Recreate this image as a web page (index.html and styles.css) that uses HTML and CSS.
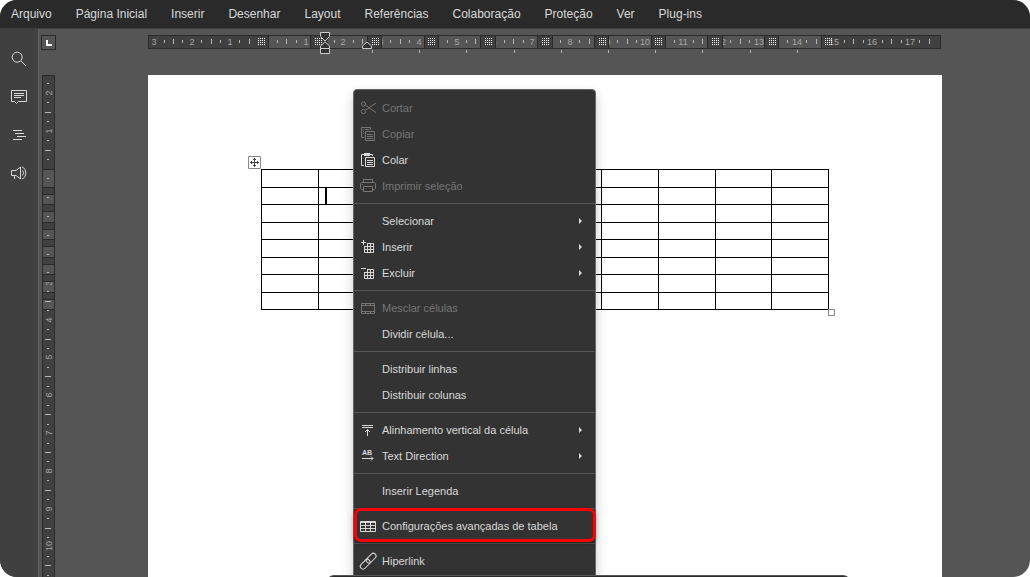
FILE: index.html
```html
<!DOCTYPE html>
<html lang="pt">
<head>
<meta charset="utf-8">
<title>Editor de documentos</title>
<link rel="stylesheet" href="styles.css">
</head>
<body>
<div class="app">
  <header class="tabs" role="tablist">
    <button class="tab" role="tab">Arquivo</button>
    <button class="tab" role="tab">Página Inicial</button>
    <button class="tab" role="tab">Inserir</button>
    <button class="tab" role="tab">Desenhar</button>
    <button class="tab" role="tab">Layout</button>
    <button class="tab" role="tab">Referências</button>
    <button class="tab" role="tab">Colaboração</button>
    <button class="tab" role="tab">Proteção</button>
    <button class="tab" role="tab">Ver</button>
    <button class="tab" role="tab">Plug-ins</button>
  </header>

  <div class="main">
    <nav class="sidebar">
      <button class="side-btn" aria-label="Localizar">
        <svg class="icon" viewBox="0 0 20 20"><circle cx="8.2" cy="8.2" r="5"/><path d="M12 12l5 5"/></svg>
      </button>
      <button class="side-btn" aria-label="Comentários">
        <svg class="icon" viewBox="0 0 20 20"><path d="M2.500 3.500h15v11H9.500l-2 2-2-2h-3zM5 6.500h10M5 8.500h10M5 10.500h7"/></svg>
      </button>
      <button class="side-btn" aria-label="Títulos">
        <svg class="icon" viewBox="0 0 20 20"><path d="M4 5.500h9M6 8.500h9M8 11.500h9M4 14.500h9"/></svg>
      </button>
      <button class="side-btn" aria-label="Comentários e suporte">
        <svg class="icon" viewBox="0 0 20 20"><path d="M2.500 7.500H7L11.500 4v12L7 12.500H2.500zM5.500 12.500v3.500M13 7.500c2 1 2 4 0 5M13 4c5 1.500 5 10.500 0 12"/></svg>
      </button>
    </nav>

    <main class="workspace">
      <button class="tab-stop" aria-label="Tabulação">
        <svg class="tab-stop-icon" viewBox="0 0 6 6"><path d="M0 0h2v4h4v2H0z"/></svg>
      </button>

      <svg class="ruler-h" viewBox="148 32 794 22">
        <defs>
          <path id="grip" class="grip" d="M0 .5h8M0 2.500h8M0 4.500h8M0 6.500h8"/>
        </defs>
        <path class="ruler-light" d="M148 35h793v14H148z"/>
        <path class="ruler-dark" d="M148 35h121v14H148zM821 35h120v14H821z"/>
        <g class="ruler-num">
          <text x="154" y="45">3</text><text x="192" y="45">2</text><text x="230" y="45">1</text>
          <text x="306" y="45">1</text><text x="343" y="45">2</text><text x="381" y="45">3</text>
          <text x="419" y="45">4</text><text x="457" y="45">5</text><text x="494" y="45">6</text>
          <text x="532" y="45">7</text><text x="570" y="45">8</text><text x="608" y="45">9</text>
          <text x="645" y="45">10</text><text x="683" y="45">11</text><text x="721" y="45">12</text>
          <text x="759" y="45">13</text><text x="797" y="45">14</text><text x="834" y="45">15</text>
          <text x="872" y="45">16</text><text x="910" y="45">17</text>
        </g>
        <path class="ruler-dark" d="M310 35h18v14h-18zM367 35h15v14h-15zM424 35h15v14h-15zM480 35h15v14h-15zM537 35h16v14h-16zM594 35h15v14h-15zM651 35h15v14h-15zM707 35h16v14h-16zM764 35h15v14h-15z"/>
        <path class="ruler-edge" d="M148.500 35.500h792v13h-792zM268.500 35v14M310.500 35v14M367.500 35v14M381.500 35v14M424.500 35v14M438.500 35v14M480.500 35v14M495.500 35v14M537.500 35v14M552.500 35v14M594.500 35v14M608.500 35v14M651.500 35v14M665.500 35v14M707.500 35v14M722.500 35v14M764.500 35v14M778.500 35v14M821.500 35v14"/>
        <path class="ruler-tick" d="M173.500 39v5M211.500 39v5M249.500 39v5M286.500 39v5M362.500 39v5M400.500 39v5M475.500 39v5M513.500 39v5M589.500 39v5M627.500 39v5M702.500 39v5M740.500 39v5M816.500 39v5M853.500 39v5M891.500 39v5M929.500 39v5"/>
        <path class="ruler-tick" d="M164.500 40v3M182.500 40v3M201.500 40v3M220.500 40v3M239.500 40v3M277.500 40v3M296.500 40v3M334.500 40v3M353.500 40v3M390.500 40v3M409.500 40v3M447.500 40v3M466.500 40v3M504.500 40v3M523.500 40v3M560.500 40v3M579.500 40v3M617.500 40v3M636.500 40v3M674.500 40v3M693.500 40v3M730.500 40v3M749.500 40v3M787.500 40v3M806.500 40v3M844.500 40v3M863.500 40v3M882.500 40v3M901.500 40v3M919.500 40v3"/>
        <path class="ruler-tick" d="M372.500 50v3M419.500 50v3M466.500 50v3M514.500 50v3M561.500 50v3M608.500 50v3M655.500 50v3M702.500 50v3M750.500 50v3M797.500 50v3"/>
        <use href="#grip" x="258" y="38"/><use href="#grip" x="315" y="38"/><use href="#grip" x="372" y="38"/>
        <use href="#grip" x="428" y="38"/><use href="#grip" x="485" y="38"/><use href="#grip" x="542" y="38"/>
        <use href="#grip" x="599" y="38"/><use href="#grip" x="655" y="38"/><use href="#grip" x="712" y="38"/>
        <use href="#grip" x="769" y="38"/><use href="#grip" x="825" y="38"/>
        <path class="ruler-marker" d="M320.500 32.500h9v4L325 41l-4.500-4.500zM325 42l4.500 4v2.500h-9V46zM320.500 48.500h9v5h-9zM367 42l4.500 4v2.500h-9V46z"/>
      </svg>

      <div class="ruler-v-slot">
        <svg class="ruler-v" viewBox="42 75 13 502">
          <path class="ruler-dark" d="M42 75h13v502H42z"/>
          <path class="ruler-light" d="M42 169h13v140H42z"/>
          <g class="ruler-num">
            <text transform="translate(52 93) rotate(-90)">2</text>
            <text transform="translate(52 131) rotate(-90)">1</text>
            <text transform="translate(52 283) rotate(-90)">3</text>
            <text transform="translate(52 320) rotate(-90)">4</text>
            <text transform="translate(52 357) rotate(-90)">5</text>
            <text transform="translate(52 395) rotate(-90)">6</text>
            <text transform="translate(52 433) rotate(-90)">7</text>
            <text transform="translate(52 471) rotate(-90)">8</text>
            <text transform="translate(52 509) rotate(-90)">9</text>
            <text transform="translate(52 546) rotate(-90)">10</text>
          </g>
          <path class="ruler-dark" d="M42 187h13v7H42zM42 204h13v7H42zM42 222h13v7H42zM42 239h13v7H42zM42 257h13v7H42zM42 274h13v7H42zM42 292h13v7H42z"/>
          <path class="ruler-edge" d="M42.500 580V75.500h12V580M42 169.500h13M42 187.500h13M42 194.500h13M42 204.500h13M42 211.500h13M42 222.500h13M42 229.500h13M42 239.500h13M42 246.500h13M42 257.500h13M42 264.500h13M42 274.500h13M42 281.500h13M42 292.500h13M42 299.500h13M42 309.500h13"/>
          <path class="ruler-tick" d="M45 112.500h6M45 150.500h6M45 301.500h6M45 339.500h6M45 376.500h6M45 414.500h6M45 452.500h6M45 490.500h6M45 528.500h6M45 565.500h6"/>
          <path class="ruler-tick" d="M47 83.500h2M47 102.500h2M47 121.500h2M47 140.500h2M47 159.500h2M47 178.500h2M47 197.500h2M47 216.500h2M47 235.500h2M47 254.500h2M47 272.500h2M47 291.500h2M47 310.500h2M47 329.500h2M47 348.500h2M47 367.500h2M47 386.500h2M47 405.500h2M47 424.500h2M47 443.500h2M47 461.500h2M47 480.500h2M47 499.500h2M47 518.500h2M47 537.500h2M47 556.500h2M47 575.500h2"/>
        </svg>
      </div>

      <section class="page">
        <div class="table-wrap">
          <table class="doc-table">
            <colgroup><col class="wide"><col class="narrow"><col class="wide"><col class="wide"><col class="wide"><col class="narrow"><col class="wide"><col class="wide"><col class="narrow"><col class="wide"></colgroup>
            <tbody>
              <tr><td></td><td></td><td></td><td></td><td></td><td></td><td></td><td></td><td></td><td></td></tr>
              <tr><td></td><td class="active-cell"><span class="caret"></span></td><td></td><td></td><td></td><td></td><td></td><td></td><td></td><td></td></tr>
              <tr><td></td><td></td><td></td><td></td><td></td><td></td><td></td><td></td><td></td><td></td></tr>
              <tr><td></td><td></td><td></td><td></td><td></td><td></td><td></td><td></td><td></td><td></td></tr>
              <tr><td></td><td></td><td></td><td></td><td></td><td></td><td></td><td></td><td></td><td></td></tr>
              <tr><td></td><td></td><td></td><td></td><td></td><td></td><td></td><td></td><td></td><td></td></tr>
              <tr><td></td><td></td><td></td><td></td><td></td><td></td><td></td><td></td><td></td><td></td></tr>
              <tr><td></td><td></td><td></td><td></td><td></td><td></td><td></td><td></td><td></td><td></td></tr>
            </tbody>
          </table>
          <svg class="move-handle" viewBox="0 0 13 13"><path class="handle-box" d="M.5 .5h12v12H.5z"/><path class="handle-arrows" d="M6.500 2v9M2 6.500h9M5 3.500h3M5 9.500h3M3.500 5v3M9.500 5v3"/></svg>
          <span class="resize-handle"></span>
        </div>
      </section>
    </main>
  </div>

  <div class="menu" role="menu">
    <button class="item" role="menuitem" disabled>
      <svg class="icon" viewBox="0 0 20 20"><circle cx="5.500" cy="6" r="2.100"/><circle cx="5.500" cy="13.500" r="2.100"/><path d="M7.300 7.200L18 14.500M7.300 12.300L18 5"/></svg>
      <span class="label">Cortar</span>
    </button>
    <button class="item" role="menuitem" disabled>
      <svg class="icon" viewBox="0 0 20 20"><path d="M6 13.500H3.500v-10h9V6M5 5.500h1M7 5.500h4M5 7.500h1M5 9.500h1M7.500 7.500h9v9h-9zM9 10.500h6M9 12.500h6M9 14.500h6"/></svg>
      <span class="label">Copiar</span>
    </button>
    <button class="item" role="menuitem">
      <svg class="icon" viewBox="0 0 20 20"><path class="solid" d="M6 3h6v3H6z"/><path d="M6 15.500H3.500v-11H6M12 4.500h2.500V6M7.500 7.500h9v9h-9zM9 10.500h6M9 12.500h6M9 14.500h6"/></svg>
      <span class="label">Colar</span>
    </button>
    <button class="item" role="menuitem" disabled>
      <svg class="icon" viewBox="0 0 20 20"><path d="M5.500 6.500v-3h9v3M5 13.500H3.500l-1-1v-5l1-1h13l1 1v5l-1 1H15M5.500 10.500h9v5h-9zM4 8.500h1"/></svg>
      <span class="label">Imprimir seleção</span>
    </button>
    <hr class="sep">
    <button class="item" role="menuitem"><span class="icon"></span><span class="label">Selecionar</span><span class="arrow"></span></button>
    <button class="item" role="menuitem">
      <svg class="icon" viewBox="0 0 20 20"><path d="M5.500 3v5M3 5.500h5M9 6.500h6.500v9h-9V9M6.500 9.500h9M6.500 12.500h9M9.500 6.500v9M12.500 6.500v9"/></svg>
      <span class="label">Inserir</span><span class="arrow"></span>
    </button>
    <button class="item" role="menuitem">
      <svg class="icon" viewBox="0 0 20 20"><path d="M3 5.500h5M9 6.500h6.500v9h-9V9M6.500 9.500h9M6.500 12.500h9M9.500 6.500v9M12.500 6.500v9"/></svg>
      <span class="label">Excluir</span><span class="arrow"></span>
    </button>
    <hr class="sep">
    <button class="item" role="menuitem" disabled>
      <svg class="icon" viewBox="0 0 20 20"><path d="M3.500 5.500h13v10h-13zM3.500 7.500h13M3.500 13.500h13M7.500 5v2M12.500 5v2M7.500 14v2M12.500 14v2"/></svg>
      <span class="label">Mesclar células</span>
    </button>
    <button class="item" role="menuitem"><span class="icon"></span><span class="label">Dividir célula...</span></button>
    <hr class="sep">
    <button class="item" role="menuitem"><span class="icon"></span><span class="label">Distribuir linhas</span></button>
    <button class="item" role="menuitem"><span class="icon"></span><span class="label">Distribuir colunas</span></button>
    <hr class="sep">
    <button class="item" role="menuitem">
      <svg class="icon" viewBox="0 0 20 20"><path d="M4 5.500h11M4 7.500h11M9.500 9.500v6.500M7 12l2.500-2.500L12 12"/></svg>
      <span class="label">Alinhamento vertical da célula</span><span class="arrow"></span>
    </button>
    <button class="item" role="menuitem">
      <svg class="icon" viewBox="0 0 20 20"><text class="icon-text" x="4" y="9">AB</text><path d="M4 12.500h11M13 10.500l2 2-2 2"/></svg>
      <span class="label">Text Direction</span><span class="arrow"></span>
    </button>
    <hr class="sep">
    <button class="item" role="menuitem"><span class="icon"></span><span class="label">Inserir Legenda</span></button>
    <hr class="sep">
    <button class="item highlighted" role="menuitem">
      <svg class="icon" viewBox="0 0 20 20"><path d="M2.500 5.500h15v10h-15zM2 6.500h16M2.500 9.500h15M2.500 12.500h15M7.500 6v10M12.500 6v10"/></svg>
      <span class="label">Configurações avançadas de tabela</span>
    </button>
    <hr class="sep">
    <button class="item" role="menuitem">
      <svg class="icon" viewBox="0 0 20 20"><g transform="rotate(-45 10 10)"><rect x="0" y="7.500" width="11.500" height="5.500" rx="2.750"/><rect x="8.500" y="7.500" width="11.500" height="5.500" rx="2.750"/></g></svg>
      <span class="label">Hiperlink</span>
    </button>
  </div>
  <div class="bottom-panel"></div>
</div>
</body>
</html>
```
FILE: styles.css
```css
html {
  height: 100%;
  background: #fff;
}

body {
  margin: 0;
  height: 100%;
  font-family: "Liberation Sans", Arial, sans-serif;
  font-size: 11px;
}

button {
  margin: 0;
  padding: 0;
  border: 0;
  background: none;
  color: inherit;
  font: inherit;
}

.app {
  position: relative;
  display: flex;
  flex-direction: column;
  height: 100%;
  overflow: hidden;
  border-radius: 17px;
  background: #555;
  color: #d9d9d9;
}

.tabs {
  display: flex;
  flex: none;
  height: 28px;
  border-bottom: 1px solid #404040;
  background: #2a2a2a;
}

.tab {
  padding: 0 12px;
  font-size: 12px;
}

.tab:first-child {
  padding-left: 11px;
}

.main {
  display: flex;
  flex: 1;
  min-height: 0;
}

.sidebar {
  display: flex;
  flex-direction: column;
  flex: none;
  width: 38px;
  padding-top: 11px;
  border-right: 1px solid #616161;
  background: #404040;
}

.side-btn {
  display: flex;
  align-items: center;
  justify-content: center;
  height: 38px;
}

.icon {
  flex: none;
  width: 20px;
  height: 20px;
  fill: none;
  stroke: currentColor;
}

.solid {
  fill: currentColor;
  stroke: none;
}

.icon-text {
  fill: currentColor;
  stroke: none;
  font-size: 7px;
  font-weight: bold;
}

.workspace {
  display: grid;
  flex: 1;
  grid-template-columns: 21px 1fr;
  grid-template-rows: 46px 1fr;
  min-width: 0;
  min-height: 0;
  overflow: hidden;
}

.tab-stop {
  display: flex;
  align-items: center;
  justify-content: center;
  box-sizing: border-box;
  width: 15px;
  height: 15px;
  margin: 6px 0 0 2px;
  border: 1px solid #2a2a2a;
}

.tab-stop-icon {
  width: 6px;
  height: 6px;
  margin: 1px 0 0 1px;
  fill: #fff;
}

.ruler-h {
  justify-self: center;
  width: 794px;
  height: 22px;
  margin-top: 3px;
}

.ruler-v-slot {
  min-height: 0;
  padding-left: 3px;
  overflow: hidden;
}

.ruler-v {
  display: block;
  width: 13px;
  height: 502px;
}

.ruler-light {
  fill: #555;
}

.ruler-dark {
  fill: #404040;
}

.ruler-edge {
  fill: none;
  stroke: #2a2a2a;
}

.ruler-tick {
  stroke: #b6b6b6;
}

.ruler-num {
  fill: #a6a6a6;
  font-size: 9px;
  text-anchor: middle;
}

.ruler-marker {
  fill: #333;
  stroke: #ccc;
}

.grip {
  stroke: #fff;
  stroke-dasharray: 1 1;
}

.page {
  justify-self: center;
  box-sizing: border-box;
  width: 794px;
  padding: 94px 113px 0;
  background: #fff;
}

.table-wrap {
  position: relative;
  width: 568px;
}

.doc-table {
  width: 568px;
  border-collapse: collapse;
  table-layout: fixed;
}

.wide {
  width: 57px;
}

.narrow {
  width: 56px;
}

.doc-table tr {
  height: 18px;
}

.doc-table tr:nth-child(even) {
  height: 17px;
}

.doc-table td {
  padding: 0;
  border: 1px solid #000;
}

.active-cell {
  vertical-align: top;
}

.caret {
  display: block;
  width: 2px;
  height: 16px;
  margin-left: 6px;
  background: #000;
}

.move-handle {
  position: absolute;
  top: -13px;
  left: -13px;
  width: 13px;
  height: 13px;
  fill: none;
}

.handle-box {
  stroke: #888;
}

.handle-arrows {
  stroke: #444;
}

.resize-handle {
  position: absolute;
  right: -6px;
  bottom: -6px;
  box-sizing: border-box;
  width: 7px;
  height: 7px;
  border: 1px solid #888;
  background: #fff;
}

.menu {
  position: absolute;
  top: 89px;
  left: 353px;
  display: flex;
  flex-direction: column;
  box-sizing: border-box;
  width: 243px;
  padding: 5px 0;
  border: 1px solid #666;
  border-radius: 4px;
  background: #333;
  box-shadow: 0 5px 12px rgba(0, 0, 0, 0.2);
}

.item {
  position: relative;
  display: flex;
  align-items: center;
  gap: 4px;
  height: 26px;
  padding: 0 13px 0 4px;
  text-align: left;
}

.item:disabled {
  color: #757575;
}

.label {
  flex: 1;
}

.arrow {
  border: 3px solid transparent;
  border-right-width: 0;
  border-left-color: currentColor;
}

.sep {
  width: 100%;
  margin: 4px 0;
  border: 0;
  border-top: 1px solid #555;
}

.highlighted::after {
  content: "";
  position: absolute;
  z-index: 1;
  inset: -5px -1px -3px 0;
  border: 3px solid #f00;
  border-radius: 7px;
  box-shadow: 0 2px 4px rgba(0, 0, 0, 0.3);
}

.bottom-panel {
  position: absolute;
  right: 179px;
  bottom: -14px;
  left: 326px;
  box-sizing: border-box;
  height: 16px;
  border: 1px solid #555;
  border-radius: 10px;
  background: #2a2a2a;
}
```
